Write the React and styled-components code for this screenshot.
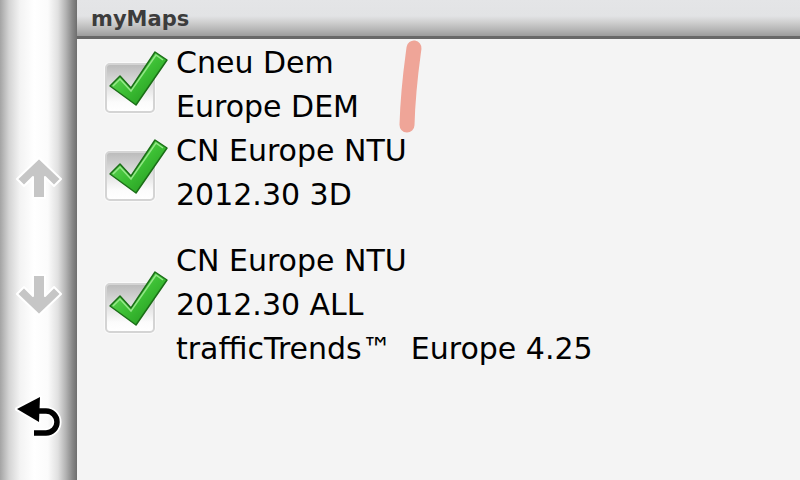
import React from 'react'
import styled, { createGlobalStyle } from 'styled-components'

const GlobalStyle = createGlobalStyle`
  html, body {
    margin: 0;
    padding: 0;
    background: #f4f4f4;
  }
  body {
    font-family: "DejaVu Sans", "Liberation Sans", sans-serif;
  }
`

const maps = [
  { id: 1, lines: ['Cneu Dem', 'Europe DEM'], checked: true },
  { id: 2, lines: ['CN Europe NTU', '2012.30 3D'], checked: true },
  { id: 3, lines: ['CN Europe NTU', '2012.30 ALL', 'trafficTrends™  Europe 4.25'], checked: true, spaced: true },
]

function ArrowIcon({ down }) {
    return (
        <svg width="46" height="42" viewBox="0 0 46 42" style={down ? { transform: 'scaleY(-1)' } : undefined}>
            <polygon
                points="23,1 45,22 38,29 29,20 29,41 17,41 17,20 8,29 1,22"
                fill="#c6c6c6"
                stroke="#ffffff"
                strokeWidth="2"
                strokeLinejoin="round"
            />
        </svg>
    )
}

function BackIcon() {
    return (
        <svg width="48" height="46" viewBox="0 0 48 46">
            <path d="M22 17 H31 A11 11 0 0 1 31 39 H19" fill="none" stroke="#fff" strokeWidth="9" />
            <polygon points="2,15 25,3 24,28" fill="#fff" stroke="#fff" strokeWidth="4" strokeLinejoin="round" />
            <path d="M22 17 H31 A11 11 0 0 1 31 39 H19" fill="none" stroke="#000" strokeWidth="5.5" />
            <polygon points="2,15 25,3 24,28" fill="#000" />
        </svg>
    )
}

function CheckMark() {
    return (
        <CheckSvg viewBox="0 -14 68 60" width="68" height="60">
            <defs>
                <linearGradient id="chk" x1="0" y1="0" x2="1" y2="1">
                    <stop offset="0" stopColor="#7be06f" />
                    <stop offset="0.5" stopColor="#3cbf34" />
                    <stop offset="1" stopColor="#1c8c18" />
                </linearGradient>
            </defs>
            <polygon
                points="5,23 15,13 26,25 50,-11 62,-3 31,42"
                fill="url(#chk)"
                stroke="#1b6e17"
                strokeWidth="1.5"
                strokeLinejoin="round"
            />
            <polyline points="8,23 15,16 26,28 51,-8 58,-3" fill="none" stroke="#a8f09a" strokeWidth="1.5" opacity="0.8" />
        </CheckSvg>
    )
}

function App() {
    return (
        <Screen>
            <GlobalStyle />
            <Sidebar>
                <NavButton $top={157}><ArrowIcon /></NavButton>
                <NavButton $top={75}><ArrowIcon down /></NavButton>
                <NavButton $top={78}><BackIcon /></NavButton>
            </Sidebar>
            <Main>
                <Header>myMaps</Header>
                <List>
                    {maps.map(m => (
                        <Row key={m.id} $spaced={m.spaced}>
                            <Box>{m.checked && <CheckMark />}</Box>
                            <Label>
                                {m.lines.map((l, i) => <div key={i}>{l}</div>)}
                            </Label>
                        </Row>
                    ))}
                    <Scribble width="34" height="100" viewBox="0 0 34 100">
                        <path d="M21 9 C 19 24, 15 50, 14 86" fill="none" stroke="#efa598" strokeWidth="15" strokeLinecap="round" />
                    </Scribble>
                </List>
            </Main>
        </Screen>
    )
}

export default App;

const Screen = styled.div`
    display: flex;
    width: 800px;
    height: 480px;
    overflow: hidden;
    background: #f4f4f4;
`

const Sidebar = styled.div`
    width: 77px;
    flex-shrink: 0;
    display: flex;
    flex-direction: column;
    align-items: center;
    background: linear-gradient(to right,
        #a4a4a4 0px, #d4d4d4 9px, #f3f3f3 20px, #ffffff 34px,
        #fbfbfb 48px, #e0e0e0 58px, #b2b2b2 66px, #8a8a8a 72px, #6e6e6e 77px);
`

const NavButton = styled.div`
    margin-top: ${p => p.$top}px;
    display: flex;
    justify-content: center;
    svg { display: block; }
`

const Main = styled.div`
    flex: 1;
    display: flex;
    flex-direction: column;
    min-width: 0;
`

const Header = styled.div`
    height: 39px;
    box-sizing: border-box;
    padding: 7px 0 0 14px;
    font-size: 21px;
    font-weight: bold;
    color: #3c3c3c;
    background: linear-gradient(to bottom,
        #e4e5e7 0px, #e2e3e5 16px, #d0d0d0 22px, #b4b4b4 30px,
        #9c9c9c 36px, #686868 36px, #686868 39px);
`

const List = styled.div`
    position: relative;
    flex: 1;
    padding-top: 2px;
    background: #f4f4f4;
`

const Row = styled.div`
    display: flex;
    align-items: center;
    padding-left: 28px;
    margin-top: ${p => (p.$spaced ? 22 : 0)}px;
`

const Box = styled.div`
    position: relative;
    width: 50px;
    height: 50px;
    box-sizing: border-box;
    margin-top: 6px;
    margin-right: 21px;
    flex-shrink: 0;
    border: 2px solid #d4d4d4;
    border-radius: 5px;
    background: linear-gradient(to bottom, #bcbcbc 0%, #e0e0e0 45%, #fbfbfb 80%, #ffffff 100%);
    box-shadow: 0 0 0 1px #fafafa;
`

const CheckSvg = styled.svg`
    position: absolute;
    left: -2px;
    top: -16px;
`

const Label = styled.div`
    font-size: 30px;
    line-height: 44px;
    color: #000;
    white-space: pre;
`

const Scribble = styled.svg`
    position: absolute;
    left: 316px;
    top: 0;
`
